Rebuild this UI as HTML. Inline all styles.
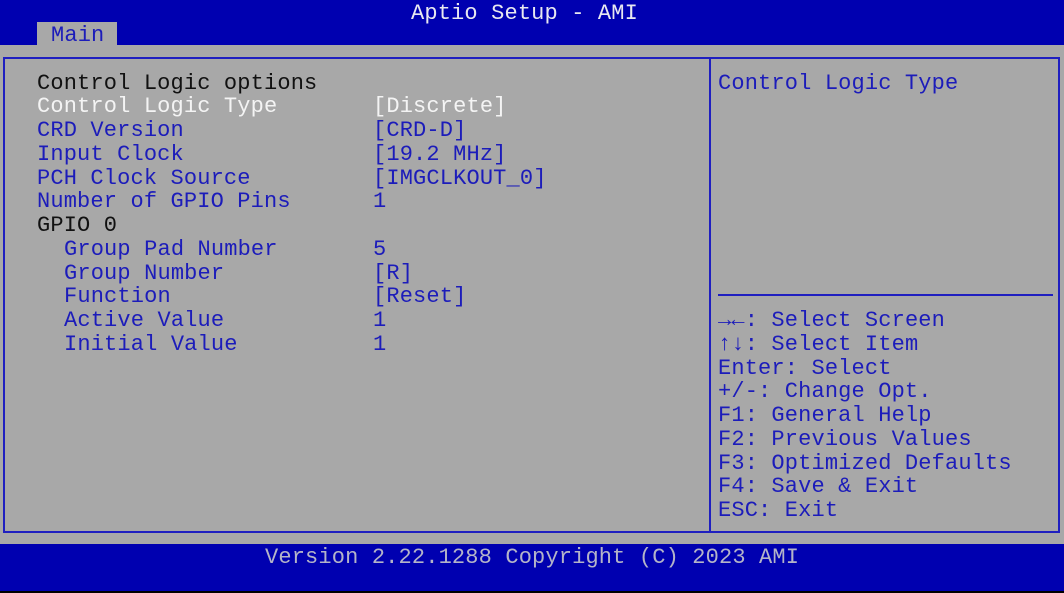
<!DOCTYPE html>
<html><head><style>
body{margin:0;width:1064px;height:593px;overflow:hidden;background:#000;font-family:"Liberation Mono",monospace;font-size:22px;}
.t{position:absolute;white-space:pre;line-height:24px;letter-spacing:0.15px;margin-top:2px;}
#top{position:absolute;left:0;top:0;width:1064px;height:45px;background:#0000b0;}
#gray{position:absolute;left:0;top:45px;width:1064px;height:499px;background:#a8a8a8;}
#foot{position:absolute;left:0;top:544px;width:1064px;height:47px;background:#0000b0;}
#panel{position:absolute;left:3px;top:57px;width:1053px;height:472px;border:2px solid #1f1fc0;}
#div{position:absolute;left:709px;top:57px;width:2px;height:474px;background:#1f1fc0;}
#hl{position:absolute;left:718px;top:294px;width:335px;height:2px;background:#1f1fc0;}
#tab{position:absolute;left:37px;top:22px;width:80px;height:23px;background:#a8a8a8;}
.b{color:#1c1cba}.k{color:#111}.w{color:#f4f4f4}
</style></head><body>
<div id="top"></div><div id="gray"></div><div id="foot"></div>
<div id="tab"></div>
<div id="panel"></div><div id="div"></div><div id="hl"></div>
<div class="t" style="left:411px;top:0px;color:#e8e8f0">Aptio Setup - AMI</div>
<div class="t b" style="left:51px;top:22px;">Main</div>
<div class="t k" style="left:37px;top:70px">Control Logic options</div>
<div class="t w" style="left:37px;top:93px">Control Logic Type</div>
<div class="t w" style="left:373px;top:93px">[Discrete]</div>
<div class="t b" style="left:37px;top:117px">CRD Version</div>
<div class="t b" style="left:373px;top:117px">[CRD-D]</div>
<div class="t b" style="left:37px;top:141px">Input Clock</div>
<div class="t b" style="left:373px;top:141px">[19.2 MHz]</div>
<div class="t b" style="left:37px;top:165px">PCH Clock Source</div>
<div class="t b" style="left:373px;top:165px">[IMGCLKOUT_0]</div>
<div class="t b" style="left:37px;top:188px">Number of GPIO Pins</div>
<div class="t b" style="left:373px;top:188px">1</div>
<div class="t k" style="left:37px;top:212px">GPIO 0</div>
<div class="t b" style="left:64px;top:236px">Group Pad Number</div>
<div class="t b" style="left:373px;top:236px">5</div>
<div class="t b" style="left:64px;top:260px">Group Number</div>
<div class="t b" style="left:373px;top:260px">[R]</div>
<div class="t b" style="left:64px;top:283px">Function</div>
<div class="t b" style="left:373px;top:283px">[Reset]</div>
<div class="t b" style="left:64px;top:307px">Active Value</div>
<div class="t b" style="left:373px;top:307px">1</div>
<div class="t b" style="left:64px;top:331px">Initial Value</div>
<div class="t b" style="left:373px;top:331px">1</div>
<div class="t b" style="left:718px;top:70px">Control Logic Type</div>
<div class="t b" style="left:718px;top:307px"><b>→←</b>: Select Screen</div>
<div class="t b" style="left:718px;top:331px"><b>↑↓</b>: Select Item</div>
<div class="t b" style="left:718px;top:355px">Enter: Select</div>
<div class="t b" style="left:718px;top:378px">+/-: Change Opt.</div>
<div class="t b" style="left:718px;top:402px">F1: General Help</div>
<div class="t b" style="left:718px;top:426px">F2: Previous Values</div>
<div class="t b" style="left:718px;top:450px">F3: Optimized Defaults</div>
<div class="t b" style="left:718px;top:473px">F4: Save &amp; Exit</div>
<div class="t b" style="left:718px;top:497px">ESC: Exit</div>
<div class="t" style="left:265px;top:544px;color:#b4b4c8">Version 2.22.1288 Copyright (C) 2023 AMI</div>
</body></html>
